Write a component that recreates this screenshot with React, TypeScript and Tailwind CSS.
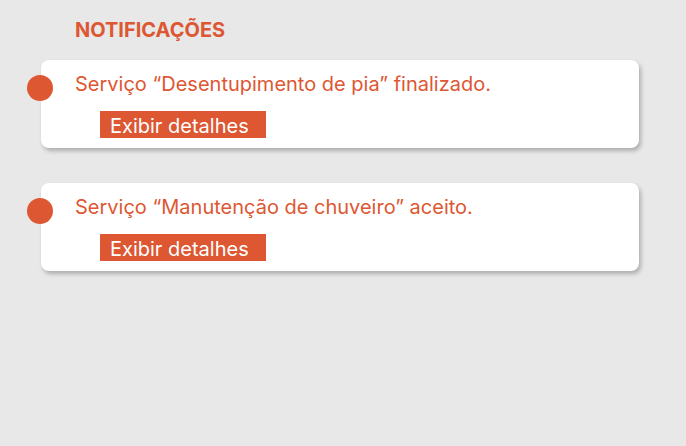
import React from "react";

const items = [
  "Serviço “Desentupimento de pia” finalizado.",
  "Serviço “Manutenção de chuveiro” aceito.",
];

export default function App() {
  return (
    <div
      className="w-[686px] h-[446px] bg-[#e8e8e8] overflow-hidden"
      style={{ fontFamily: "Inter, 'Noto Sans', sans-serif" }}
    >
      <div className="pl-[75px] pt-[18px] text-[20px] leading-[24px] font-bold text-[#dd5733]">
        NOTIFICAÇÕES
      </div>
      <div className="flex flex-col gap-[35px] mt-[18px] ml-[41px]">
        {items.map((t, i) => (
          <div
            key={i}
            className="relative w-[598px] h-[88px] bg-white rounded-[8px] shadow-[2px_3px_4px_rgba(0,0,0,0.25)] pl-[34px] pt-[12px]"
          >
            <div className="absolute left-[-14px] top-[15px] w-[26px] h-[26px] rounded-full bg-[#dd5733]" />
            <div className="text-[20px] leading-[24px] text-[#dd5733]">{t}</div>
            <div className="mt-[15px] ml-[25px] w-[166px] h-[27px] bg-[#dd5733] text-white text-[20px] leading-[24px] pt-[3px] pl-[10px]">
              Exibir detalhes
            </div>
          </div>
        ))}
      </div>
    </div>
  );
}
